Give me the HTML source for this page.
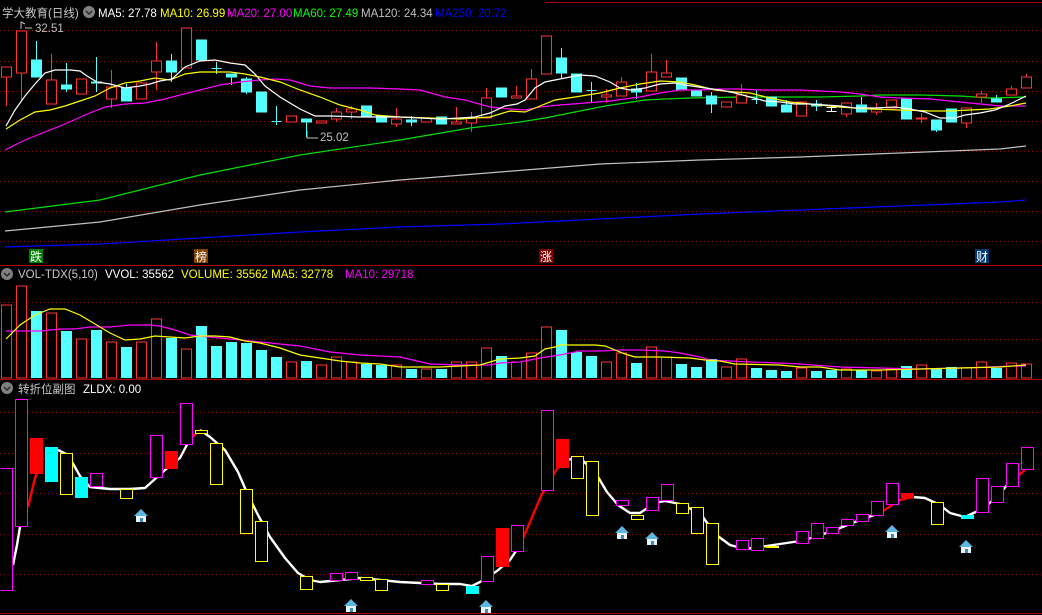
<!DOCTYPE html>
<html><head><meta charset="utf-8"><style>
html,body{margin:0;padding:0;background:#000;}
svg{display:block;}
text{font-family:"Liberation Sans","Noto Sans CJK SC",sans-serif;font-size:11.5px;}
</style></head><body>
<svg width="1042" height="615" viewBox="0 0 1042 615" xmlns="http://www.w3.org/2000/svg">
<defs>
<g id="h"><polygon points="-7,0 0,-7 7,0" fill="#5cb8e0"/><rect x="-5" y="0" width="10" height="6" fill="#e8f4fa"/><rect x="-1" y="2" width="3" height="4" fill="#3a8fc0"/></g>
</defs>
<rect width="1042" height="615" fill="#000"/>
<g stroke="#8a0000" stroke-dasharray="1,3" stroke-width="1" shape-rendering="crispEdges">
<line x1="0" x2="1042" y1="30.5" y2="30.5"/><line x1="0" x2="1042" y1="61.5" y2="61.5"/><line x1="0" x2="1042" y1="91.5" y2="91.5"/><line x1="0" x2="1042" y1="121.5" y2="121.5"/><line x1="0" x2="1042" y1="151.5" y2="151.5"/><line x1="0" x2="1042" y1="181.5" y2="181.5"/><line x1="0" x2="1042" y1="211.5" y2="211.5"/><line x1="0" x2="1042" y1="241.5" y2="241.5"/>
<line x1="0" x2="1042" y1="302.5" y2="302.5"/><line x1="0" x2="1042" y1="339.5" y2="339.5"/>
<line x1="0" x2="1042" y1="412.5" y2="412.5"/><line x1="0" x2="1042" y1="453.5" y2="453.5"/><line x1="0" x2="1042" y1="493.5" y2="493.5"/><line x1="0" x2="1042" y1="534.5" y2="534.5"/><line x1="0" x2="1042" y1="574.5" y2="574.5"/>
</g>
<g stroke="#b00000" stroke-width="1" shape-rendering="crispEdges">
<line x1="545" x2="1042" y1="2.5" y2="2.5"/>
<line x1="0" x2="1042" y1="265.5" y2="265.5"/>
<line x1="0" x2="1042" y1="379.5" y2="379.5"/>
<line x1="0" x2="1042" y1="613.5" y2="613.5"/>
</g>

<text x="2" y="17" fill="#c8c8c8">学大教育(日线)</text>
<circle cx="89" cy="12" r="6" fill="#808080"/><path d="M86 11 l3 3 l3 -3" stroke="#222" fill="none" stroke-width="1.3"/>
<text x="98" y="17" fill="#ffffff">MA5: 27.78</text>
<text x="160" y="17" fill="#ffff00">MA10: 26.99</text>
<text x="227" y="17" fill="#ff00ff">MA20: 27.00</text>
<text x="293" y="17" fill="#00ff00">MA60: 27.49</text>
<text x="361" y="17" fill="#c0c0c0">MA120: 24.34</text>
<text x="435" y="17" fill="#0000ff">MA250: 20.72</text>

<circle cx="7" cy="274" r="6" fill="#808080"/><path d="M4 273 l3 3 l3 -3" stroke="#222" fill="none" stroke-width="1.3"/>
<text x="18" y="278" fill="#c8c8c8">VOL-TDX(5,10)</text>
<text x="105" y="278" fill="#ffffff">VVOL: 35562</text>
<text x="181" y="278" fill="#ffff00">VOLUME: 35562  MA5: 32778</text>
<text x="345" y="278" fill="#ff00ff">MA10: 29718</text>

<circle cx="7" cy="388" r="6" fill="#808080"/><path d="M4 387 l3 3 l3 -3" stroke="#222" fill="none" stroke-width="1.3"/>
<text x="18" y="393" fill="#c8c8c8">转折位副图</text>
<text x="83" y="393" fill="#ffffff">ZLDX: 0.00</text>

<path d="M21 29 L21 22 L25 24" stroke="#c0c0c0" fill="none"/><path d="M25 28 l7 0" stroke="#c0c0c0"/>
<text x="35" y="32" fill="#c0c0c0">32.51</text>
<path d="M307 131 L307 138 L318 138" stroke="#c0c0c0" fill="none"/>
<text x="320" y="141" fill="#c0c0c0">25.02</text>

<g fill="none" stroke-width="1.2">
<polyline stroke="#0000ff" points="5,247 100,244 200,238 300,232 400,227 500,224 600,219 700,214 800,210 900,206 1000,202 1026,200"/>
<polyline stroke="#c0c0c0" points="5,231 100,222 200,205 300,190 400,180 500,172 600,164 700,160 800,157 900,153 1000,149 1026,146"/>
<polyline stroke="#00e000" points="5,212 100,200 200,175 300,155 400,140 470,128 520,122 545,118 565,114 585,110 605,106 625,103 645,100 665,99 690,98 740,97 780,97 820,97 860,96 880,95 920,95 960,96 990,98 1026,97"/>
</g>

<g shape-rendering="crispEdges" stroke-width="1">
<g stroke="#ff3232" fill="#000">
<line x1="6.5" x2="6.5" y1="67" y2="106"/><rect x="1.5" y="67" width="10" height="10"/>
<line x1="21.5" x2="21.5" y1="31" y2="100"/><rect x="16.5" y="31" width="10" height="42"/>
<line x1="51.5" x2="51.5" y1="54" y2="104"/><rect x="46.5" y="80" width="10" height="24"/>
<rect x="76.5" y="79" width="10" height="15"/>
<line x1="111.5" x2="111.5" y1="70" y2="108"/><rect x="106.5" y="87" width="10" height="12"/>
<line x1="141.5" x2="141.5" y1="82" y2="99"/><rect x="136.5" y="83" width="10" height="16"/>
<line x1="156.5" x2="156.5" y1="42" y2="90"/><rect x="151.5" y="61" width="10" height="11"/>
<rect x="181.5" y="28" width="10" height="40"/>
<rect x="286.5" y="116" width="10" height="6"/>
<rect x="316.5" y="121" width="10" height="2"/>
<line x1="336.5" x2="336.5" y1="108" y2="122"/><rect x="331.5" y="112" width="10" height="7"/>
<line x1="351.5" x2="351.5" y1="106" y2="119"/><rect x="346.5" y="109" width="10" height="3"/>
<line x1="396.5" x2="396.5" y1="108" y2="127"/><rect x="391.5" y="119" width="10" height="5"/>
<rect x="421.5" y="118" width="10" height="4"/>
<line x1="456.5" x2="456.5" y1="107" y2="124"/><rect x="451.5" y="122" width="10" height="2"/>
<line x1="471.5" x2="471.5" y1="112" y2="132"/><rect x="466.5" y="118" width="10" height="5"/>
<line x1="486.5" x2="486.5" y1="88" y2="118"/><rect x="481.5" y="98" width="10" height="20"/>
<line x1="516.5" x2="516.5" y1="86" y2="97"/><rect x="511.5" y="96" width="10" height="2"/>
<line x1="531.5" x2="531.5" y1="69" y2="99"/><rect x="526.5" y="79" width="10" height="20"/>
<rect x="541.5" y="36" width="10" height="38"/>
<line x1="606.5" x2="606.5" y1="89" y2="103"/><rect x="601.5" y="95" width="10" height="2"/>
<line x1="621.5" x2="621.5" y1="77" y2="96"/><rect x="616.5" y="82" width="10" height="14"/>
<line x1="651.5" x2="651.5" y1="54" y2="91"/><rect x="646.5" y="72" width="10" height="19"/>
<line x1="666.5" x2="666.5" y1="60" y2="77"/><rect x="661.5" y="73" width="10" height="4"/>
<rect x="721.5" y="102" width="10" height="5"/>
<line x1="741.5" x2="741.5" y1="84" y2="103"/><rect x="736.5" y="95" width="10" height="8"/>
<rect x="796.5" y="102" width="10" height="14"/>
<line x1="846.5" x2="846.5" y1="103" y2="117"/><rect x="841.5" y="103" width="10" height="11"/>
<line x1="876.5" x2="876.5" y1="103" y2="115"/><rect x="871.5" y="108" width="10" height="4"/>
<rect x="886.5" y="100" width="10" height="8"/>
<line x1="921.5" x2="921.5" y1="113" y2="123"/><rect x="916.5" y="118" width="10" height="1"/>
<line x1="966.5" x2="966.5" y1="108" y2="128"/><rect x="961.5" y="108" width="10" height="15"/>
<line x1="981.5" x2="981.5" y1="91" y2="103"/><rect x="976.5" y="94" width="10" height="3"/>
<line x1="1011.5" x2="1011.5" y1="86" y2="95"/><rect x="1006.5" y="89" width="10" height="6"/>
<line x1="1026.5" x2="1026.5" y1="74" y2="88"/><rect x="1021.5" y="77" width="10" height="11"/>
</g>
<g stroke="#54ffff" fill="#54ffff">
<line x1="36.5" x2="36.5" y1="41" y2="77"/><rect x="31.5" y="60" width="10" height="17"/>
<line x1="66.5" x2="66.5" y1="63" y2="92"/><rect x="61.5" y="85" width="10" height="4"/>
<line x1="96.5" x2="96.5" y1="57" y2="92"/><rect x="91.5" y="82" width="10" height="1"/>
<line x1="126.5" x2="126.5" y1="84" y2="101"/><rect x="121.5" y="88" width="10" height="13"/>
<line x1="171.5" x2="171.5" y1="54" y2="82"/><rect x="166.5" y="61" width="10" height="11"/>
<rect x="196.5" y="40" width="10" height="20"/>
<line x1="216.5" x2="216.5" y1="62" y2="74"/><line x1="211.5" x2="221.5" y1="68.5" y2="68.5"/>
<line x1="231.5" x2="231.5" y1="74" y2="85"/><rect x="226.5" y="74" width="10" height="3"/>
<line x1="246.5" x2="246.5" y1="77" y2="94"/><rect x="241.5" y="79" width="10" height="13"/>
<rect x="256.5" y="92" width="10" height="20"/>
<line x1="276.5" x2="276.5" y1="106" y2="125"/><line x1="271.5" x2="281.5" y1="121.5" y2="121.5"/>
<line x1="306.5" x2="306.5" y1="119" y2="137"/><rect x="301.5" y="119" width="10" height="3"/>
<rect x="361.5" y="106" width="10" height="10"/>
<rect x="376.5" y="116" width="10" height="6"/>
<line x1="411.5" x2="411.5" y1="116" y2="126"/><rect x="406.5" y="120" width="10" height="2"/>
<rect x="436.5" y="117" width="10" height="7"/>
<rect x="496.5" y="88" width="10" height="9"/>
<line x1="561.5" x2="561.5" y1="48" y2="79"/><rect x="556.5" y="58" width="10" height="15"/>
<rect x="571.5" y="74" width="10" height="18"/>
<line x1="591.5" x2="591.5" y1="82" y2="103"/><line x1="586.5" x2="596.5" y1="90.5" y2="90.5"/>
<line x1="636.5" x2="636.5" y1="83" y2="99"/><rect x="631.5" y="89" width="10" height="3"/>
<rect x="676.5" y="78" width="10" height="12"/>
<rect x="691.5" y="91" width="10" height="5"/>
<line x1="711.5" x2="711.5" y1="92" y2="113"/><rect x="706.5" y="96" width="10" height="8"/>
<line x1="756.5" x2="756.5" y1="90" y2="104"/><line x1="751.5" x2="761.5" y1="99.5" y2="99.5"/>
<rect x="766.5" y="97" width="10" height="9"/>
<line x1="786.5" x2="786.5" y1="100" y2="112"/><rect x="781.5" y="105" width="10" height="7"/>
<line x1="816.5" x2="816.5" y1="100" y2="111"/><rect x="811.5" y="104" width="10" height="2"/>
<line x1="861.5" x2="861.5" y1="97" y2="112"/><rect x="856.5" y="105" width="10" height="7"/>
<rect x="901.5" y="99" width="10" height="20"/>
<line x1="936.5" x2="936.5" y1="120" y2="132"/><rect x="931.5" y="120" width="10" height="10"/>
<rect x="946.5" y="109" width="10" height="13"/>
<line x1="996.5" x2="996.5" y1="95" y2="102"/><rect x="991.5" y="99" width="10" height="3"/>
</g>
<g stroke="#ffffff"><line x1="831.5" x2="831.5" y1="105" y2="112"/><line x1="826.5" x2="836.5" y1="107.5" y2="107.5"/><line x1="826.5" x2="836.5" y1="111.5" y2="111.5"/></g>
</g>

<g fill="none" stroke-width="1.2">
<polyline stroke="#ff00ff" points="5,150 25,140 45,132 65,124 85,115 105,107 125,104 145,103 165,99 180,95 200,90 220,85 240,82 260,80 275,79 290,80 310,86 330,88 350,88 370,88 400,89 420,90 445,97 465,100 490,107 510,109 525,110 540,107 560,105 585,103 610,101 640,97 660,93 680,90 700,90 720,89 740,89 760,90 780,90 800,90 820,91 840,92 860,94 880,97 900,98 930,99 950,101 980,104 1000,106 1026,106"/>
<polyline stroke="#ffff00" points="6,129 20,120 35,112 50,110 65,106 80,101 95,96 110,88 125,83 140,81 155,78 170,80 185,74 200,72 215,72 230,72 245,74 260,77 280,82 300,90 320,97 340,105 360,110 375,115 400,117 430,118 460,119 490,117 510,111 525,112 540,106 555,100 575,97 600,93 620,88 640,84 660,81 680,82 695,85 715,90 735,92 750,93 770,98 790,102 810,104 840,107 870,109 900,110 930,111 950,111 970,110 990,109 1010,106 1026,103"/>
<polyline stroke="#ffffff" points="6,126 15,110 25,96 35,84 45,73 55,70 70,70 80,71 87,76 97,82 110,84 125,88 140,86 150,84 160,81 172,79 185,67 200,61 215,60 230,63 245,65 255,74 265,86 280,97 300,109 315,116 330,116 360,117 400,117 420,118 440,119 460,118 475,117 490,113 505,106 517,104 525,100 535,88 545,82 560,79 580,75 595,76 610,82 620,88 630,90 645,88 660,84 675,83 685,85 705,88 720,90 735,93 750,97 765,101 780,102 795,104 810,104 825,105 840,106 855,108 875,108 895,107 910,109 925,112 940,118 955,118 965,115 980,113 995,110 1010,104 1026,96"/>
</g>

<rect x="29" y="249" width="14" height="14" fill="#008000"/><text x="30" y="261" fill="#fff" style="font-size:12px">跌</text>
<rect x="194" y="249" width="14" height="14" fill="#804000"/><text x="195" y="261" fill="#fff" style="font-size:12px">榜</text>
<rect x="539" y="249" width="14" height="14" fill="#800000"/><text x="540" y="261" fill="#fff" style="font-size:12px">涨</text>
<rect x="975" y="249" width="14" height="14" fill="#003870"/><text x="976" y="261" fill="#fff" style="font-size:12px">财</text>

<g shape-rendering="crispEdges">
<g stroke="#ff3232" fill="#000">
<rect x="1.5" y="305" width="10" height="73"/><rect x="16.5" y="286" width="10" height="92"/><rect x="46.5" y="313" width="10" height="65"/><rect x="76.5" y="339" width="10" height="39"/><rect x="106.5" y="342" width="10" height="36"/><rect x="136.5" y="342" width="10" height="36"/><rect x="151.5" y="319" width="10" height="59"/><rect x="181.5" y="349" width="10" height="29"/><rect x="286.5" y="362" width="10" height="16"/><rect x="316.5" y="365" width="10" height="13"/><rect x="331.5" y="357" width="10" height="21"/><rect x="346.5" y="362" width="10" height="16"/><rect x="391.5" y="365" width="10" height="13"/><rect x="421.5" y="369" width="10" height="9"/><rect x="451.5" y="362" width="10" height="16"/><rect x="466.5" y="362" width="10" height="16"/><rect x="481.5" y="348" width="10" height="30"/><rect x="511.5" y="362" width="10" height="16"/><rect x="526.5" y="353" width="10" height="25"/><rect x="541.5" y="327" width="10" height="51"/><rect x="601.5" y="362" width="10" height="16"/><rect x="616.5" y="353" width="10" height="25"/><rect x="646.5" y="347" width="10" height="31"/><rect x="661.5" y="357" width="10" height="21"/><rect x="721.5" y="367" width="10" height="11"/><rect x="736.5" y="359" width="10" height="19"/><rect x="796.5" y="368" width="10" height="10"/><rect x="841.5" y="369" width="10" height="9"/><rect x="871.5" y="371" width="10" height="7"/><rect x="886.5" y="369" width="10" height="9"/><rect x="916.5" y="365" width="10" height="13"/><rect x="961.5" y="368" width="10" height="10"/><rect x="976.5" y="362" width="10" height="16"/><rect x="1006.5" y="363" width="10" height="15"/><rect x="1021.5" y="364" width="10" height="14"/>
</g>
<g fill="#54ffff">
<rect x="31" y="311" width="11" height="67"/><rect x="61" y="331" width="11" height="47"/><rect x="91" y="330" width="11" height="48"/><rect x="121" y="347" width="11" height="31"/><rect x="166" y="338" width="11" height="40"/><rect x="196" y="326" width="11" height="52"/><rect x="211" y="346" width="11" height="32"/><rect x="226" y="342" width="11" height="36"/><rect x="241" y="343" width="11" height="35"/><rect x="256" y="350" width="11" height="28"/><rect x="271" y="357" width="11" height="21"/><rect x="301" y="361" width="11" height="17"/><rect x="361" y="364" width="11" height="14"/><rect x="376" y="365" width="11" height="13"/><rect x="406" y="369" width="11" height="9"/><rect x="436" y="369" width="11" height="9"/><rect x="496" y="356" width="11" height="22"/><rect x="556" y="330" width="11" height="48"/><rect x="571" y="352" width="11" height="26"/><rect x="586" y="356" width="11" height="22"/><rect x="631" y="363" width="11" height="15"/><rect x="676" y="364" width="11" height="14"/><rect x="691" y="367" width="11" height="11"/><rect x="706" y="359" width="11" height="19"/><rect x="751" y="368" width="11" height="10"/><rect x="766" y="370" width="11" height="8"/><rect x="781" y="371" width="11" height="7"/><rect x="811" y="371" width="11" height="7"/><rect x="826" y="370" width="11" height="8"/><rect x="856" y="370" width="11" height="8"/><rect x="901" y="366" width="11" height="12"/><rect x="931" y="369" width="11" height="9"/><rect x="946" y="367" width="11" height="11"/><rect x="991" y="368" width="11" height="10"/>
</g>
</g>
<g fill="none" stroke-width="1.2">
<polyline stroke="#ff00ff" points="6,331 40,331 50,330 60,329 75,329 90,327 110,327 130,325 150,325 160,326 175,330 190,335 220,338 250,341 270,343 300,346 330,352 360,355 400,357 430,364 460,365 490,365 500,363 520,362 540,358 560,355 580,351 600,351 620,350 640,350 665,351 680,353 700,357 710,360 730,361 750,362 780,363 800,364 840,367 880,368 920,369 960,368 990,367 1010,366 1026,366"/>
<polyline stroke="#ffff00" points="6,339 20,325 35,315 50,309 65,309 80,315 95,324 110,333 125,340 140,339 155,336 170,337 185,338 200,336 215,336 230,337 245,341 260,343 280,348 300,355 320,358 340,361 360,363 380,364 400,367 420,367 440,367 460,366 480,365 500,359 520,358 535,356 545,349 555,347 560,345 580,345 595,345 605,346 615,350 625,354 635,357 660,357 690,358 705,360 720,361 735,364 780,365 800,367 820,367 840,370 880,370 920,369 960,368 1000,367 1026,365"/>
</g>

<g fill="none" stroke-width="2.4" stroke-linejoin="round">
<polyline stroke="#ffffff" points="13,565 17,545 20,527"/>
<polyline stroke="#ff0000" points="28,507 35,478 43,458"/>
<polyline stroke="#ffffff" points="58,450 68,455 80,476 90,487 110,489 130,489 145,488 155,479 165,470 180,458 190,439"/>
<polyline stroke="#ff0000" points="190,439 200,430"/>
<polyline stroke="#ffffff" points="200,430 210,437 225,450 238,472 248,495 258,515 270,537 285,558 298,573 310,580 320,582 340,580 360,578 380,580 400,582 420,583 440,584 460,584 472,586 480,582 497,571 510,560 520,545"/>
<polyline stroke="#ff0000" points="520,545 530,522 541,496 556,470 565,460"/>
<polyline stroke="#ffffff" points="565,460 580,458 595,472 607,492 618,505 630,513 640,513 655,503 665,501 680,504 700,513 715,534 730,545 745,549 760,547 780,544 800,541 815,537 835,530 860,520 880,513"/>
<polyline stroke="#ff0000" points="880,513 900,500 913,497"/>
<polyline stroke="#ffffff" points="913,497 925,498 940,505 950,513 965,517 980,510 995,499 1008,484"/>
<polyline stroke="#ff0000" points="1008,484 1025,470"/>
</g>
<g shape-rendering="crispEdges" stroke-width="1.2" fill="#000">
<path d="M0.5 468.5 H12.5 V590.5 H0.5" stroke="#ff00ff" fill="none"/>
<g stroke="#ff00ff">
<rect x="15.5" y="399.5" width="12" height="127"/><rect x="90.5" y="473.5" width="12" height="13"/><rect x="150.5" y="435.5" width="12" height="42"/><rect x="180.5" y="403.5" width="12" height="41"/><rect x="330.5" y="573.5" width="12" height="7"/><rect x="345.5" y="572.5" width="12" height="7"/><rect x="421.5" y="580.5" width="12" height="4"/><rect x="481.5" y="556.5" width="12" height="25"/><rect x="511.5" y="525.5" width="12" height="26"/><rect x="541.5" y="410.5" width="12" height="80"/><rect x="616.5" y="500.5" width="12" height="5"/><rect x="646.5" y="497.5" width="12" height="13"/><rect x="661.5" y="484.5" width="12" height="16"/><rect x="736.5" y="540.5" width="12" height="9"/><rect x="751.5" y="538.5" width="12" height="12"/><rect x="796.5" y="531.5" width="12" height="12"/><rect x="811.5" y="523.5" width="12" height="15"/><rect x="826.5" y="527.5" width="12" height="6"/><rect x="841.5" y="519.5" width="12" height="6"/><rect x="856.5" y="514.5" width="12" height="7"/><rect x="871.5" y="501.5" width="12" height="14"/><rect x="886.5" y="483.5" width="12" height="21"/><rect x="976.5" y="478.5" width="12" height="34"/><rect x="991.5" y="486.5" width="12" height="16"/><rect x="1006.5" y="463.5" width="12" height="23"/><rect x="1021.5" y="447.5" width="12" height="22"/>
</g>
<g stroke="#ffff00">
<rect x="60.5" y="453.5" width="12" height="41"/><rect x="120.5" y="489.5" width="12" height="9"/><rect x="195.5" y="430.5" width="12" height="3"/><rect x="210.5" y="443.5" width="12" height="41"/><rect x="240.5" y="489.5" width="12" height="44"/><rect x="255.5" y="521.5" width="12" height="40"/><rect x="300.5" y="576.5" width="12" height="13"/><rect x="360.5" y="577.5" width="12" height="3"/><rect x="375.5" y="579.5" width="12" height="11"/><rect x="436.5" y="584.5" width="12" height="6"/><rect x="571.5" y="456.5" width="12" height="22"/><rect x="586.5" y="461.5" width="12" height="54"/><rect x="631.5" y="515.5" width="12" height="4"/><rect x="676.5" y="503.5" width="12" height="10"/><rect x="691.5" y="507.5" width="12" height="26"/><rect x="706.5" y="523.5" width="12" height="41"/><rect x="931.5" y="502.5" width="12" height="22"/>
</g>
</g>
<g shape-rendering="crispEdges">
<rect x="30" y="438" width="13" height="36" fill="#ff0000"/><rect x="165" y="451" width="13" height="18" fill="#ff0000"/><rect x="496" y="528" width="13" height="39" fill="#ff0000"/><rect x="556" y="439" width="13" height="29" fill="#ff0000"/><rect x="901" y="493" width="13" height="5" fill="#ff0000"/>
<rect x="45" y="447" width="13" height="35" fill="#00ffff"/><rect x="75" y="477" width="13" height="21" fill="#00ffff"/><rect x="466" y="586" width="13" height="8" fill="#00ffff"/><rect x="961" y="515" width="13" height="4" fill="#00ffff"/>
<rect x="766" y="546" width="13" height="2" fill="#ffff00"/>
</g>
<use href="#h" x="141" y="516"/><use href="#h" x="351" y="606"/><use href="#h" x="486" y="607"/><use href="#h" x="622" y="533"/><use href="#h" x="652" y="539"/><use href="#h" x="892" y="532"/><use href="#h" x="966" y="547"/>
</svg>
</body></html>
